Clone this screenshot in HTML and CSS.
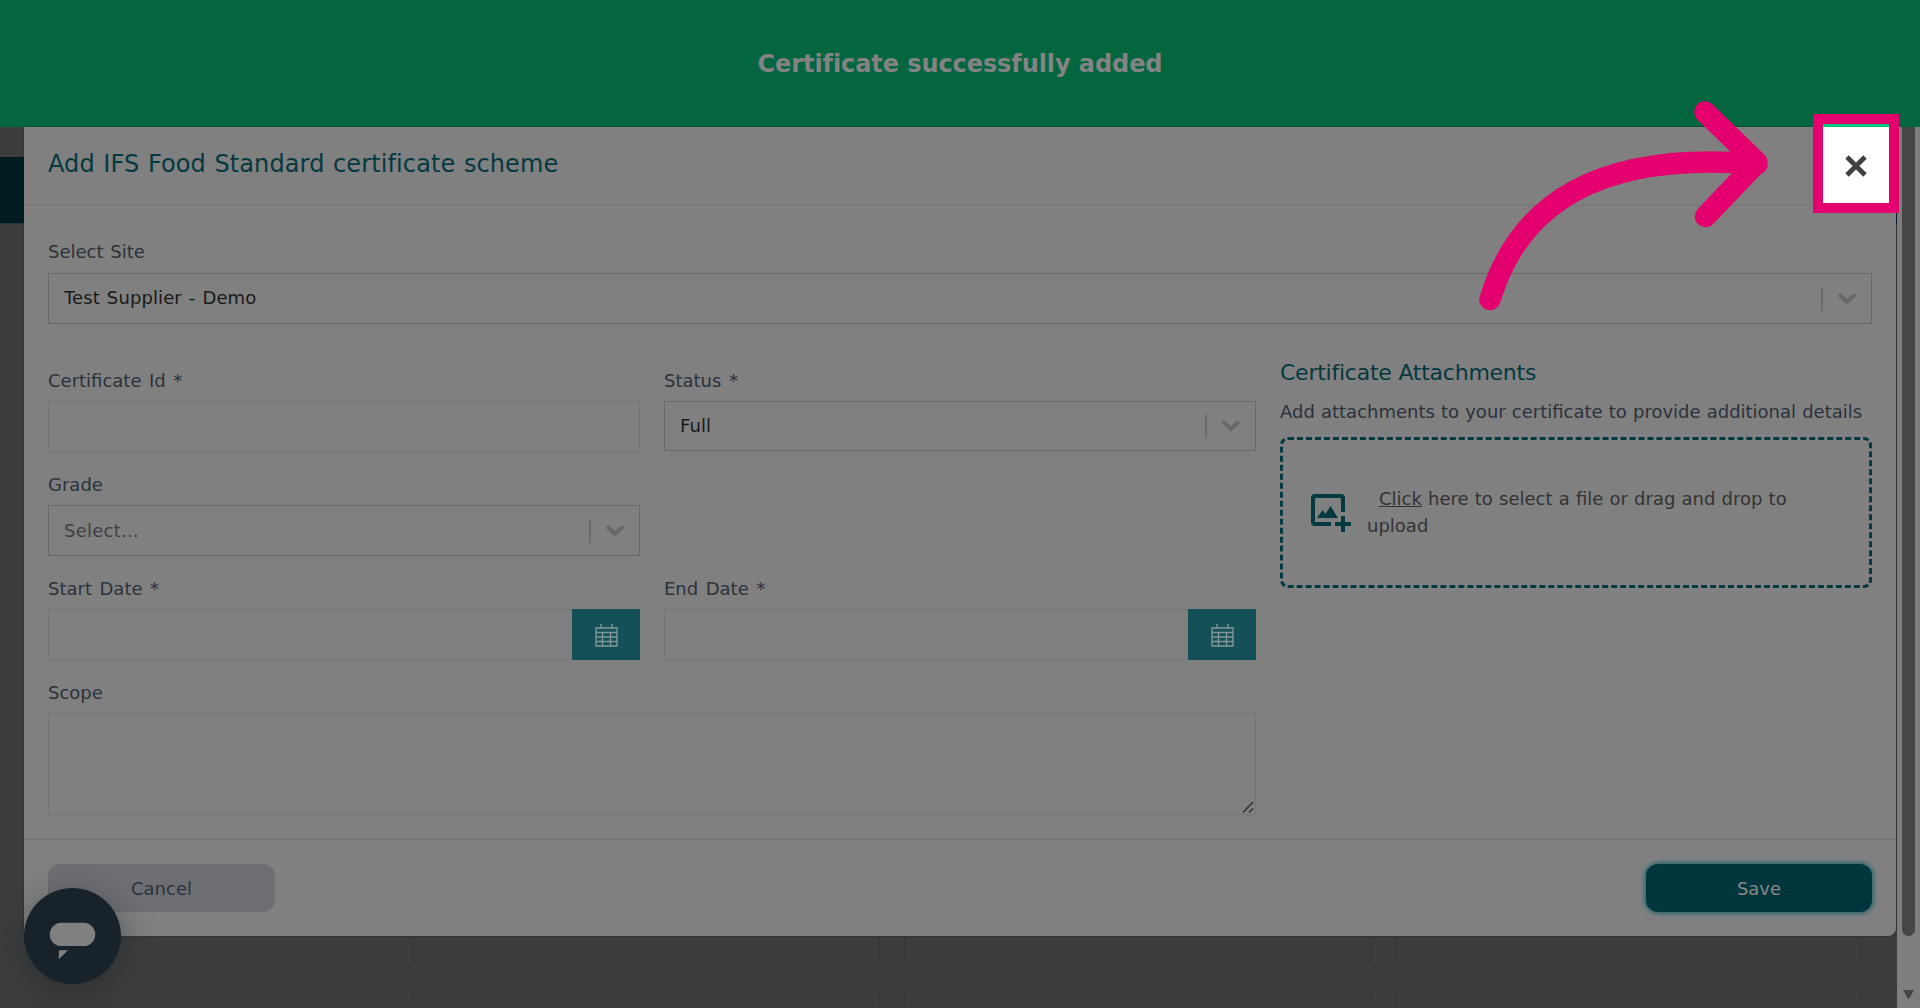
FILE: index.html
```html
<!DOCTYPE html>
<html lang="en">
<head>
<meta charset="utf-8">
<title>Add certificate</title>
<link rel="stylesheet" href="styles.css">
</head>
<body>
<svg class="defs" width="0" height="0">
  <symbol id="chevron" viewBox="0 0 24 24"><path d="M5 8.500 12 15l7-6.500" fill="none" stroke="currentColor" stroke-width="3.800" stroke-linecap="round"/></symbol>
  <symbol id="calendar" viewBox="0 0 23 23"><path d="M1 4h21v18H1zM1 8.500h21M1 13h21M1 17.500h21M7.500 8.500V22M15.500 8.500V22M6 0v4M17 0v4" fill="none" stroke="currentColor" stroke-width="1.300"/></symbol>
</svg>
<div class="page">
  <div class="page-nav"></div>
  <div class="page-cards"><i></i><i></i><i></i><i></i><i></i><i></i></div>
</div>
<div class="scrollbar"><div class="thumb"></div><div class="down"></div></div>

<div class="screen">
  <div class="toast">Certificate successfully added</div>
  <main class="modal">
    <header class="modal-head">Add IFS Food Standard certificate scheme</header>
    <section class="modal-body">
      <div class="field site">
        <label>Select Site</label>
        <div class="select"><span>Test Supplier - Demo</span><b></b><svg><use href="#chevron"/></svg></div>
      </div>
      <div class="columns">
        <div class="form">
          <div class="field"><label>Certificate Id *</label><div class="input"></div></div>
          <div class="field"><label>Status *</label><div class="select short"><span>Full</span><b></b><svg><use href="#chevron"/></svg></div></div>
          <div class="field first"><label>Grade</label><div class="select"><span class="placeholder">Select...</span><b></b><svg><use href="#chevron"/></svg></div></div>
          <div class="field first"><label>Start Date *</label><div class="input date"><button><svg><use href="#calendar"/></svg></button></div></div>
          <div class="field"><label>End Date *</label><div class="input date"><button><svg><use href="#calendar"/></svg></button></div></div>
          <div class="field wide"><label>Scope</label><div class="input area"><svg viewBox="0 0 12 12"><path d="M1 11.500 11 1M7 11.500l4-4" fill="none" stroke="currentColor" stroke-width="1.400"/></svg></div></div>
        </div>
        <aside class="attachments">
          <h2>Certificate Attachments</h2>
          <p>Add attachments to your certificate to provide additional details</p>
          <div class="dropzone">
            <svg viewBox="0 0 40 40"><path d="M32 19V5a2 2 0 0 0-2-2H4a2 2 0 0 0-2 2v24a2 2 0 0 0 2 2H20" fill="none" stroke="currentColor" stroke-width="4"/><path d="M6 25 11.500 17l3 4L19.500 13 27 25zM30 23h4v6h6v4h-6v6h-4v-6h-6v-4h6z" fill="currentColor"/></svg>
            <div class="hint"><u>Click</u> here to select a file or drag and drop to<br>upload</div>
          </div>
        </aside>
      </div>
    </section>
    <footer class="modal-foot"><button class="cancel">Cancel</button><button class="save">Save</button></footer>
  </main>
</div>

<div class="chat"><svg viewBox="0 0 96 96"><rect x="25.500" y="34.500" width="45" height="23" rx="11.500" fill="#808080"/><path d="M34.500 61.500h9l-9 9z" fill="#808080"/></svg></div>
<svg class="arrow" viewBox="1470 90 310 230"><path d="M1490 299.500C1519 203 1599 151 1757 164M1705 112l52 50.500-51.500 54" fill="none" stroke="#e5006f" stroke-width="21.500" stroke-linecap="round" stroke-linejoin="round"/></svg>
<div class="highlight"><svg viewBox="0 0 22 22"><path d="m2 2 18 18M20 2 2 20" stroke="#404040" stroke-width="4.800"/></svg></div>
</body>
</html>
```
FILE: styles.css
```css
* { box-sizing: border-box; }
body { margin: 0; height: 1008px; overflow: hidden; position: relative; background: #3d3d3d; color: #2b323c; font: 18px/27px "DejaVu Sans", Verdana, sans-serif; }
button { border: 0; font: inherit; padding: 0; }
svg { display: block; }
.defs { position: absolute; }

.page { position: absolute; inset: 0 23px 0 0; overflow: hidden; border-bottom: 1px solid #453c3c; }
.page-nav { margin-top: 157px; height: 67px; background: #011c21; border-bottom: 1px solid #2b3739; }
.page-cards { margin: -1px 35px 0 413px; padding-top: 440px; display: grid; grid-template-columns: repeat(3, 467px); grid-template-rows: 300px 22px; gap: 24px; }
.page-cards i { border: 1px solid #363636; }
.page-cards i:nth-child(n+4) { border-bottom: 0; }

.scrollbar { position: absolute; inset: 0 0 0 auto; width: 23px; background: #7e7e7e; }
.thumb { width: 13px; height: 936px; margin-left: 5px; border-radius: 7px; background: #464646; }
.down { margin: 54px 0 0 6px; width: 11px; border: 5.500px solid transparent; border-top: 9px solid #454545; }

.screen { position: relative; display: flex; flex-direction: column; }
.toast { height: 127px; padding-top: 2px; background: #03663f; color: #838383; display: flex; align-items: center; justify-content: center; font-size: 24px; font-weight: 700; letter-spacing: -.08px; }
.modal { margin: 0 24px; width: 1872px; height: 809px; background: #808080; border-radius: 0 0 8px 8px; box-shadow: 0 0 2px #222; display: flex; flex-direction: column; }
.modal-head { height: 79px; padding: 23px 24px 0; border-bottom: 1px solid #767676; color: #04393f; font-size: 24px; line-height: 29px; letter-spacing: .11px; word-spacing: .8px; }
.modal-body { flex: 1; padding: 32px 24px 0; }
.field { display: flex; flex-direction: column; }
.field label { height: 35px; padding-top: 1px; word-spacing: 1.800px; }
.site { height: 117px; }
.site label { padding-top: 0; word-spacing: 1px; }
.columns { display: grid; grid-template-columns: 1208px 592px; gap: 24px; }
.form { display: grid; grid-template-columns: 592px 592px; column-gap: 24px; grid-template-rows: 104px 104px 104px 138px; padding-top: 11px; }
.first { grid-column: 1; }
.wide { grid-column: span 2; }
.input { height: 51px; border: 1px solid #747474; }
.date { display: flex; justify-content: flex-end; }
.date button { width: 68px; margin: -1px; background: #145057; color: #83999b; display: flex; align-items: center; justify-content: center; }
.date svg { width: 23px; height: 23px; margin-top: 2px; }
.area { height: 102px; display: flex; justify-content: flex-end; align-items: flex-end; color: #2c2c2c; }
.area svg { width: 12px; height: 12px; margin: 1px; }
.select { height: 51px; border: 1px solid #686868; display: flex; align-items: center; color: #1a1a1a; padding: 0 12px 0 15px; }
.select.short { height: 50px; }
.select span { flex: 1; padding-bottom: 1px; letter-spacing: .1px; word-spacing: 1.200px; }
.site .select span { padding-bottom: 3px; }
.select .placeholder { color: #404040; letter-spacing: .25px; }
.select b { width: 2px; height: 24px; background: #6a6a6a; margin-right: 12px; }
.select svg { width: 24px; height: 24px; color: #686868; }
.attachments h2 { margin: 4px 0 0; height: 39px; color: #04393f; font-size: 22px; line-height: 28px; font-weight: 400; letter-spacing: -.24px; }
.attachments p { margin: 0; height: 39px; white-space: nowrap; word-spacing: .4px; }
.dropzone { height: 151px; border: 3px dashed #04393f; border-radius: 8px; display: flex; align-items: center; padding: 0 28px; color: #04393f; }
.dropzone svg { width: 40px; height: 40px; flex: none; }
.hint { width: 450px; margin: -1px 0 0 16px; color: #333; word-spacing: .45px; }
.hint u { margin-left: 12px; }
.modal-foot { height: 97px; border-top: 1px solid #747474; padding: 24px 24px; display: flex; justify-content: space-between; }
.modal-foot button { width: 227px; height: 48px; border-radius: 12px; }
.cancel { background: #6e6f72; color: #2b323c; }
.modal-foot .save { width: 226px; background: #02363d; color: #888; box-shadow: 0 0 5px 1px #116068; }

.chat { position: absolute; left: 24px; top: 888px; width: 97px; height: 96px; border-radius: 50%; background: #18222b; box-shadow: 0 10px 34px #2026298c; }
.arrow { position: absolute; left: 1470px; top: 90px; width: 310px; height: 230px; }
.highlight { position: absolute; left: 1813px; top: 114px; width: 86px; height: 99px; border: 10px solid #e5006f; background: linear-gradient(#00cb7c 3px, #fff 3px) padding-box; display: grid; place-items: center; }
.highlight svg { width: 22px; height: 22px; margin-top: 4px; }
```
